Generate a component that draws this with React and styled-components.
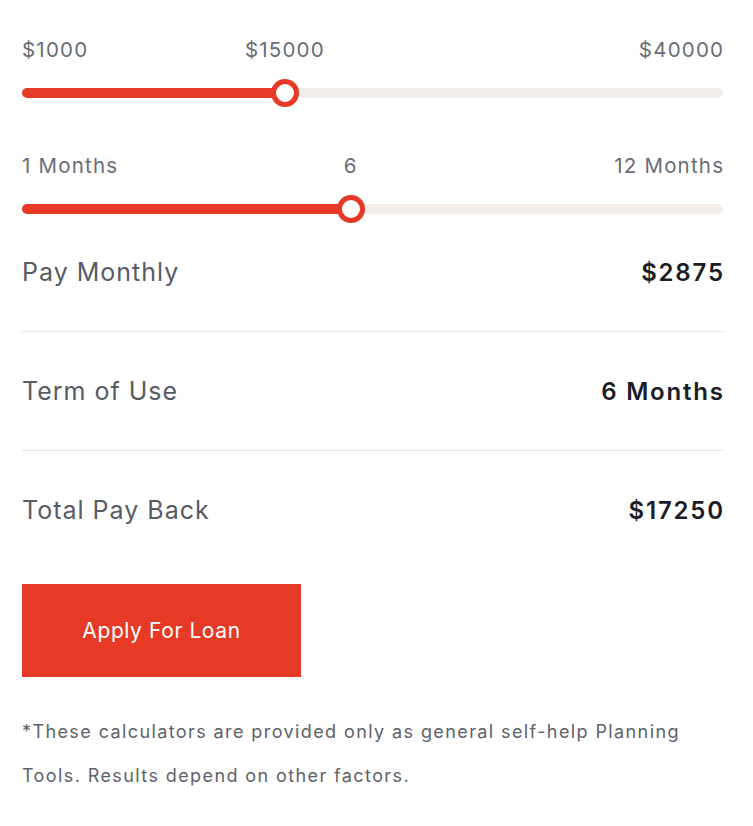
import React from "react";
import styled, { createGlobalStyle } from "styled-components";

const Global = createGlobalStyle`
  html, body { margin: 0; padding: 0; background: #ffffff; }
  body { font-family: Inter, "Noto Sans", sans-serif; -webkit-font-smoothing: antialiased; }
`;

const RED = "#e63a27";

const Page = styled.div`
  padding: 36px 30px 40px 22px;
  box-sizing: border-box;
  width: 753px;
`;

const SliderBlock = styled.div`
  display: flex;
  flex-direction: column;
  gap: 24px;
  margin-bottom: ${(p) => p.$mb}px;
`;

const LabelRow = styled.div`
  position: relative;
  display: flex;
  justify-content: space-between;
  height: 28px;
  line-height: 28px;
  font-size: 20.5px;
  letter-spacing: 1.2px;
  color: #6a6d75;
`;

const EndLabel = styled.span`
  margin-right: ${(p) => (p.$end ? "-1.2px" : "0")};
`;

const ValueLabel = styled.span`
  position: absolute;
  top: 0;
  transform: translateX(-50%);
`;

const Track = styled.div`
  position: relative;
  height: 10px;
  border-radius: 5px;
  background: #f2ede9;
`;

const Fill = styled.div`
  height: 100%;
  border-radius: 5px;
  background: ${RED};
`;

const Thumb = styled.div`
  position: absolute;
  top: 50%;
  width: 28px;
  height: 28px;
  box-sizing: border-box;
  border: 5px solid ${RED};
  border-radius: 50%;
  background: #fff;
  transform: translate(-50%, -50%);
`;

const Row = styled.div`
  display: flex;
  justify-content: space-between;
  align-items: center;
  height: 30px;
  border-bottom: ${(p) => (p.$last ? "none" : "1px solid #e6e3df")};
  padding-top: ${(p) => (p.$first ? "0" : "44px")};
  padding-bottom: ${(p) => (p.$last ? "0" : "44px")};
`;

const RowLabel = styled.span`
  font-size: 25px;
  letter-spacing: 1px;
  color: #575b65;
`;

const RowValue = styled.span`
  font-size: 24px;
  font-weight: 600;
  letter-spacing: 1.8px;
  margin-right: -1.8px;
  color: #1b1c26;
`;

const Rows = styled.div`
  margin-top: 43px;
`;

const Button = styled.button`
  display: block;
  margin-top: 59px;
  width: 279px;
  height: 93px;
  border: none;
  border-radius: 0;
  background: ${RED};
  color: #fff;
  font-family: Inter, "Noto Sans", sans-serif;
  font-size: 21px;
  letter-spacing: 0.6px;
  cursor: pointer;
`;

const Note = styled.p`
  margin: 33px 0 0;
  font-size: 18px;
  line-height: 44px;
  letter-spacing: 1.4px;
  color: #5e626b;
  max-width: 700px;
`;

function Slider({ min, max, value, pos, mb }) {
  return (
    <SliderBlock $mb={mb}>
      <LabelRow>
        <EndLabel>{min}</EndLabel>
        <ValueLabel style={{ left: `${pos}%` }}>{value}</ValueLabel>
        <EndLabel $end>{max}</EndLabel>
      </LabelRow>
      <Track>
        <Fill style={{ width: `${pos}%` }} />
        <Thumb style={{ left: `${pos}%` }} />
      </Track>
    </SliderBlock>
  );
}

export default function App() {
  return (
    <>
      <Global />
      <Page>
        <Slider min="$1000" max="$40000" value="$15000" pos={37.5} mb={54} />
        <Slider min="1 Months" max="12 Months" value="6" pos={46.9} mb={0} />
        <Rows>
          <Row $first>
            <RowLabel>Pay Monthly</RowLabel>
            <RowValue>$2875</RowValue>
          </Row>
          <Row>
            <RowLabel>Term of Use</RowLabel>
            <RowValue>6 Months</RowValue>
          </Row>
          <Row $last>
            <RowLabel>Total Pay Back</RowLabel>
            <RowValue>$17250</RowValue>
          </Row>
        </Rows>
        <Button>Apply For Loan</Button>
        <Note>
          *These calculators are provided only as general self-help Planning
          Tools. Results depend on other factors.
        </Note>
      </Page>
    </>
  );
}
